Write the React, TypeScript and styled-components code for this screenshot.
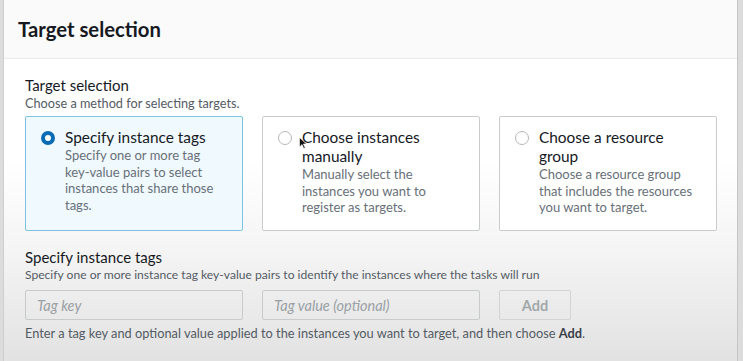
import React from "react";
import styled, { createGlobalStyle } from "styled-components";

const Global = createGlobalStyle`
  html, body { margin: 0; padding: 0; }
  body {
    width: 743px; height: 361px; overflow: hidden;
    background: #e4e4e4;
    font-family: Lato, "Open Sans", "Liberation Sans", sans-serif;
    color: #16191f;
  }
`;

const Page = styled.div`
  width: 743px;
  height: 361px;
  display: flex;
  background: #dcdcdc;
`;

const Panel = styled.div`
  margin-left: 3px;
  width: 733px;
  border-left: 1px solid #cfcfcf;
  border-right: 1px solid #c6c6c6;
  display: flex;
  flex-direction: column;
  background: linear-gradient(180deg, #ffffff 0%, #ffffff 45%, #f4f4f4 70%, #e2e2e2 100%);
`;

const Header = styled.div`
  height: 58px;
  background: #fafafa;
  border-bottom: 1px solid #eaeaea;
  display: flex;
  align-items: center;
  padding-left: 14px;
`;

const HeaderTitle = styled.h2`
  margin: 0;
  font-size: 20.3px;
  font-weight: 700;
  color: #16191f;
`;

const Body = styled.div`
  padding: 17px 20px 0 21px;
  display: flex;
  flex-direction: column;
`;

const Label = styled.div`
  font-size: 15px;
  line-height: 19px;
  color: #16191f;
`;

const Desc = styled.div<{ $size?: number }>`
  font-size: ${(p) => p.$size ?? 12.1}px;
  line-height: 16px;
  color: #545b64;
`;

const Cards = styled.div`
  margin-top: 5px;
  display: grid;
  grid-template-columns: 218px 218px 218px;
  column-gap: 19px;
`;

const Card = styled.div<{ $active?: boolean }>`
  height: 115px;
  box-sizing: border-box;
  border: 1px solid ${(p) => (p.$active ? "#7cc3e2" : "#c9cccc")};
  border-radius: 2px;
  background: ${(p) => (p.$active ? "#f0f9fe" : "#ffffff")};
  padding: 11px 14px 0 15px;
  display: flex;
  gap: 10px;
`;

const Radio = styled.span<{ $checked?: boolean }>`
  flex: none;
  width: 14px;
  height: 14px;
  margin-top: 3px;
  box-sizing: border-box;
  border-radius: 50%;
  border: ${(p) => (p.$checked ? "4px solid #0a6bb5" : "1.5px solid #b5b8bb")};
  background: #fff;
`;

const CardText = styled.div`
  width: 158px;
  display: flex;
  flex-direction: column;
`;

const CardTitle = styled.div`
  font-size: 15.4px;
  line-height: 19px;
  color: #16191f;
`;

const CardDesc = styled.div`
  font-size: 13px;
  line-height: 16.7px;
  color: #687078;
`;

const Section = styled.div`
  margin-top: 17px;
`;

const InputRow = styled.div`
  margin-top: 7px;
  display: grid;
  grid-template-columns: 218px 218px 72px;
  column-gap: 19px;
`;

const Input = styled.div`
  height: 30px;
  box-sizing: border-box;
  border: 1px solid #c8cbcb;
  border-radius: 2px;
  padding-left: 11px;
  display: flex;
  align-items: center;
  font-size: 14.5px;
  font-style: italic;
  color: #9aa0a4;
`;

const AddButton = styled.div`
  height: 30px;
  box-sizing: border-box;
  border: 1px solid #d2d4d4;
  border-radius: 2px;
  display: flex;
  align-items: center;
  justify-content: center;
  font-size: 14.5px;
  font-weight: 700;
  color: #a2a8aa;
`;

const Help = styled.div`
  margin-top: 5px;
  font-size: 12.8px;
  line-height: 16px;
  color: #545b64;
  b { color: #3b4048; }
`;

const Cursor = styled.svg`
  position: absolute;
  left: 299px;
  top: 137px;
`;

const Wrap = styled.div`
  position: relative;
`;

const options = [
  {
    title: "Specify instance tags",
    desc: "Specify one or more tag key-value pairs to select instances that share those tags.",
    active: true,
  },
  {
    title: "Choose instances manually",
    desc: "Manually select the instances you want to register as targets.",
    active: false,
  },
  {
    title: "Choose a resource group",
    desc: "Choose a resource group that includes the resources you want to target.",
    active: false,
  },
];

export default function App() {
  return (
    <Wrap>
      <Global />
      <Page>
        <Panel>
          <Header>
            <HeaderTitle>Target selection</HeaderTitle>
          </Header>
          <Body>
            <Label>Target selection</Label>
            <Desc $size={12.7}>Choose a method for selecting targets.</Desc>
            <Cards>
              {options.map((o) => (
                <Card key={o.title} $active={o.active}>
                  <Radio $checked={o.active} />
                  <CardText>
                    <CardTitle>{o.title}</CardTitle>
                    <CardDesc>{o.desc}</CardDesc>
                  </CardText>
                </Card>
              ))}
            </Cards>
            <Section>
              <Label>Specify instance tags</Label>
              <Desc>
                Specify one or more instance tag key-value pairs to identify the instances where the tasks will run
              </Desc>
              <InputRow>
                <Input>Tag key</Input>
                <Input>Tag value (optional)</Input>
                <AddButton>Add</AddButton>
              </InputRow>
              <Help>
                Enter a tag key and optional value applied to the instances you want to target, and then choose <b>Add</b>.
              </Help>
            </Section>
          </Body>
        </Panel>
      </Page>
      <Cursor width="8" height="12" viewBox="0 0 8 12">
        <path d="M0.5 0.5 L0.5 10 L3 7.6 L4.8 11.5 L6.2 10.8 L4.4 7 L7.5 7 Z" fill="#111" stroke="#fff" strokeWidth="0.6" />
      </Cursor>
    </Wrap>
  );
}
